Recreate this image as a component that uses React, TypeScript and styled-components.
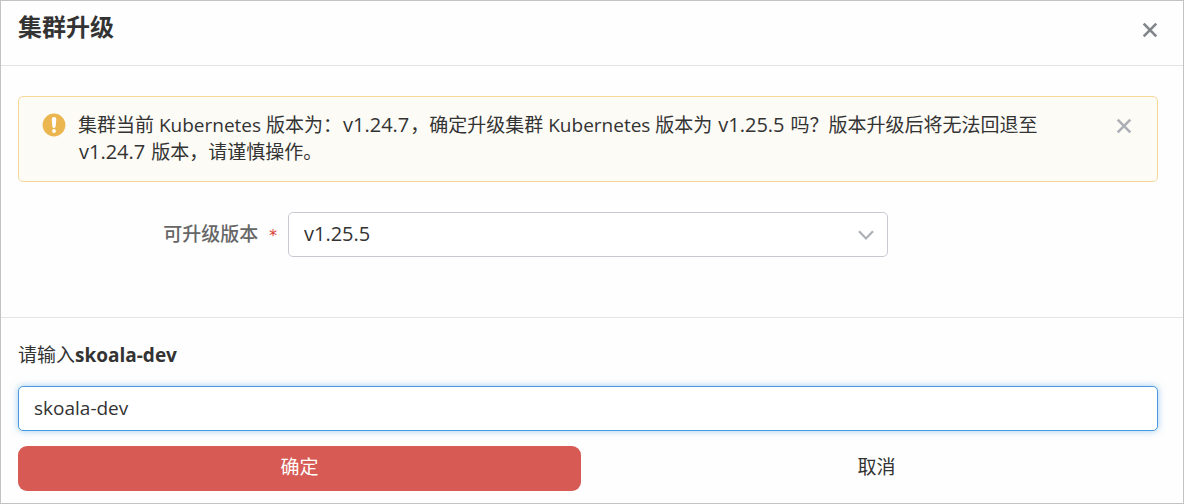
import React, { useState } from "react";
import styled, { createGlobalStyle } from "styled-components";

const GlobalStyle = createGlobalStyle`
  *, *::before, *::after { box-sizing: border-box; }
  body {
    margin: 0;
    background: #fefefe;
    color: #333333;
    font-family: "Open Sans", "Noto Sans CJK SC", sans-serif;
    font-size: 19px;
    line-height: 27px;
  }
  button, input, select { font: inherit; color: inherit; margin: 0; }
`;

const Dialog = styled.main`
  display: flex;
  flex-direction: column;
  min-height: 100vh;
  border: 1px solid #c3c3c3;
`;

const Header = styled.header`
  display: flex;
  align-items: flex-end;
  justify-content: space-between;
  padding: 11px 19px 21px 17px;
  border-bottom: 1px solid #e4e4e6;
`;

const Title = styled.h1`
  margin: 0;
  padding-bottom: 2px;
  font-size: 24px;
  line-height: 30px;
  font-weight: 700;
`;

const IconButton = styled.button<{ $tone: string }>`
  display: flex;
  flex: none;
  padding: 5px;
  border: 0;
  background: none;
  color: ${(p) => p.$tone};
  cursor: pointer;
`;

const Body = styled.section`
  display: flex;
  flex-direction: column;
  gap: 30px;
  padding: 30px 25px 60px 17px;
`;

const Alert = styled.div`
  display: flex;
  align-items: flex-start;
  padding: 15px 19px 15px 22px;
  border: 1px solid #f4d999;
  border-radius: 5px;
  background: #fcfbf6;
`;

const AlertIcon = styled.svg`
  flex: none;
  margin: 1px 12px 0 1px;
`;

const AlertText = styled.p`
  flex: 1;
  margin: 0 60px 0 0;
`;

const Version = styled.span`
  padding: 0 1px;
  font-size: 20px;
  line-height: 20px;
`;

const Field = styled.div`
  display: flex;
  align-items: center;
`;

const FieldLabel = styled.label`
  flex: none;
  width: 270px;
  padding-right: 10px;
  text-align: right;
  font-weight: 500;
  color: #666666;
`;

const Required = styled.span`
  margin-left: 10px;
  font-family: "DejaVu Sans Mono", monospace;
  font-size: 16px;
  line-height: 20px;
  color: #d93a32;
`;

const SelectBox = styled.div`
  display: grid;
  flex: 0 1 600px;
  align-items: center;
  > * { grid-area: 1 / 1; }
  > svg { justify-self: end; margin-right: 14px; pointer-events: none; }
`;

const Select = styled.select`
  width: 100%;
  height: 45px;
  padding: 0 48px 2px 15px;
  border: 1px solid #c9c9d4;
  border-radius: 5px;
  background: #ffffff;
  font-size: 20px;
  appearance: none;
`;

const Footer = styled.form`
  display: flex;
  flex-direction: column;
  padding: 24px 25px 12px 17px;
  border-top: 1px solid #e4e4e6;
`;

const ConfirmLabel = styled.label`
  margin-bottom: 17px;
`;

const TextInput = styled.input`
  width: 100%;
  height: 45px;
  padding: 0 15px 2px;
  border: 1px solid #4799e2;
  border-radius: 5px;
  background: #ffffff;
  outline: 0;
  box-shadow: 0 0 7px rgba(71, 153, 226, 0.5);
`;

const Actions = styled.div`
  display: grid;
  grid-template-columns: 1fr 1fr;
  gap: 14px;
  margin-top: 15px;
`;

const ActionButton = styled.button<{ $danger?: boolean }>`
  height: 45px;
  padding: 0 15px 2px;
  border: 0;
  border-radius: 9px;
  background: ${(p) => (p.$danger ? "#d75a54" : "transparent")};
  color: ${(p) => (p.$danger ? "#ffffff" : "#333333")};
  cursor: pointer;
`;

const CrossIcon = () => (
  <svg width="18" height="18" viewBox="0 0 18 18" fill="none" stroke="currentColor" strokeWidth="2.6" aria-hidden="true">
    <path d="M2.7 2.7 15.3 15.3M15.3 2.7 2.7 15.3" />
  </svg>
);

export default function App() {
  const [name, setName] = useState("skoala-dev");
  return (
    <>
      <GlobalStyle />
      <Dialog>
        <Header>
          <Title>集群升级</Title>
          <IconButton type="button" aria-label="关闭" $tone="#818489">
            <CrossIcon />
          </IconButton>
        </Header>
        <Body>
          <Alert role="alert">
            <AlertIcon width="24" height="24" viewBox="0 0 24 24" aria-hidden="true">
              <circle cx="12" cy="12" r="11.4" fill="#ebb550" />
              <path d="M9.7 6.2a2.3 2.3 0 0 1 4.6 0l-.6 7a1.7 1.7 0 0 1-3.4 0z" fill="#fff" />
              <circle cx="12" cy="18" r="1.9" fill="#fff" />
            </AlertIcon>
            <AlertText>
              集群当前 Kubernetes 版本为：<Version>v1.24.7</Version>，确定升级集群 Kubernetes 版本为{" "}
              <Version>v1.25.5</Version> 吗？版本升级后将无法回退至 <Version>v1.24.7</Version> 版本，请谨慎操作。
            </AlertText>
            <IconButton type="button" aria-label="关闭提示" $tone="#acafb6">
              <CrossIcon />
            </IconButton>
          </Alert>
          <Field>
            <FieldLabel htmlFor="version">
              可升级版本<Required>*</Required>
            </FieldLabel>
            <SelectBox>
              <Select id="version" defaultValue="v1.25.5">
                <option>v1.25.5</option>
              </Select>
              <svg width="16" height="10" viewBox="0 0 16 10" fill="none" stroke="#acafb6" strokeWidth="2.2" aria-hidden="true">
                <path d="M1 1.2 8 8.4 15 1.2" />
              </svg>
            </SelectBox>
          </Field>
        </Body>
        <Footer onSubmit={(e) => e.preventDefault()}>
          <ConfirmLabel htmlFor="name">
            请输入<strong>skoala-dev</strong>
          </ConfirmLabel>
          <TextInput id="name" value={name} onChange={(e) => setName(e.target.value)} />
          <Actions>
            <ActionButton type="submit" $danger>确定</ActionButton>
            <ActionButton type="button">取消</ActionButton>
          </Actions>
        </Footer>
      </Dialog>
    </>
  );
}
